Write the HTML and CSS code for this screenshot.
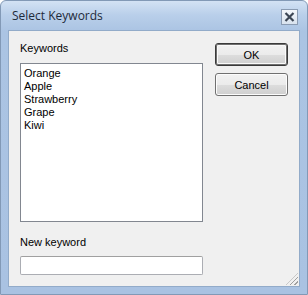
FILE: index.html
```html
<!DOCTYPE html>
<html lang="en">
<head>
    <meta charset="utf-8">
    <title>Select Keywords</title>
    <link rel="stylesheet" href="styles.css">
</head>
<body>
    <div class="window">
        <div class="titlebar">
            <span class="title">Select Keywords</span>
            <button class="close" aria-label="Close">
                <svg width="11" height="10" viewBox="0 0 11 10"><path d="M1.5 1 L9.5 9 M9.5 1 L1.5 9" stroke="#3c4654" stroke-width="2.2"/></svg>
            </button>
        </div>
        <div class="client">
            <div class="left">
                <label class="label">Keywords</label>
                <ul class="listbox">
                    <li>Orange</li>
                    <li>Apple</li>
                    <li>Strawberry</li>
                    <li>Grape</li>
                    <li>Kiwi</li>
                </ul>
                <label class="label label-new">New keyword</label>
                <input class="textbox" type="text">
            </div>
            <div class="buttons">
                <button class="btn default">OK</button>
                <button class="btn">Cancel</button>
            </div>
            <div class="grip"></div>
        </div>
    </div>
</body>
</html>
```

FILE: styles.css
```css
body {
    margin: 0;
    background: #fff;
    font-family: "Liberation Sans", Arial, sans-serif;
    font-size: 11px;
    color: #000;
}

.window {
    width: 308px;
    height: 295px;
    box-sizing: border-box;
    border: 1px solid #8299b6;
    border-radius: 6px 6px 0 0;
    background: linear-gradient(#d3e2f4, #b9cfea 14px, #abc4e3 30px, #a9c2e2);
    display: flex;
    flex-direction: column;
}

.titlebar {
    height: 29px;
    display: flex;
    align-items: center;
    justify-content: space-between;
    padding: 0 9px 0 11px;
}
.title {
    font-family: "Open Sans", "Liberation Sans", sans-serif;
    font-size: 12px;
    color: #1e2a3a;
    margin-top: -1px;
}
.close {
    width: 17px;
    height: 16px;
    padding: 0;
    display: flex;
    align-items: center;
    justify-content: center;
    border: 1px solid #8a9bb2;
    background: linear-gradient(#f4f7fb, #d8e2ee);
    margin-top: 3px;
}

.client {
    flex: 1;
    margin: 0 7px 7px;
    border: 1px solid #92abc9;
    background: #f0f0f0;
    display: grid;
    grid-template-columns: 183px 1fr;
    column-gap: 12px;
    padding: 11px 0 0 11px;
    position: relative;
}

.left {
    display: flex;
    flex-direction: column;
}
.label {
    line-height: 13px;
    height: 13px;
}
.listbox {
    list-style: none;
    margin: 8px 0 0;
    padding: 3px 3px;
    height: 159px;
    box-sizing: border-box;
    border: 1px solid #828790;
    background: #fff;
}
.listbox li {
    line-height: 13px;
}
.label-new {
    margin-top: 14px;
}
.textbox {
    margin: 7px 0 0;
    width: 183px;
    height: 19px;
    box-sizing: border-box;
    border: 1px solid #abadb3;
    border-top-color: #a0a0a0;
    border-radius: 2px;
    background: #fff;
    font: inherit;
}

.buttons {
    display: flex;
    flex-direction: column;
    gap: 7px;
    padding-top: 1px;
}
.btn {
    width: 73px;
    height: 23px;
    padding: 0;
    border: 1px solid #707070;
    border-radius: 3px;
    background: linear-gradient(#f2f2f2, #ebebeb 50%, #dddddd 50%, #cfcfcf);
    font: inherit;
    color: #000;
    box-shadow: inset 0 0 0 1px #fcfcfc;
}
.btn.default {
    border-color: #3a3a3a;
    box-shadow: inset 0 0 0 1px #6f6f6f, inset 0 0 0 2px #fafafa;
}

.grip {
    position: absolute;
    right: 1px;
    bottom: 1px;
    width: 12px;
    height: 12px;
    background: repeating-linear-gradient(135deg, transparent 0 2px, #a0a0a0 2px 3px);
    clip-path: polygon(100% 0, 100% 100%, 0 100%);
}
```
